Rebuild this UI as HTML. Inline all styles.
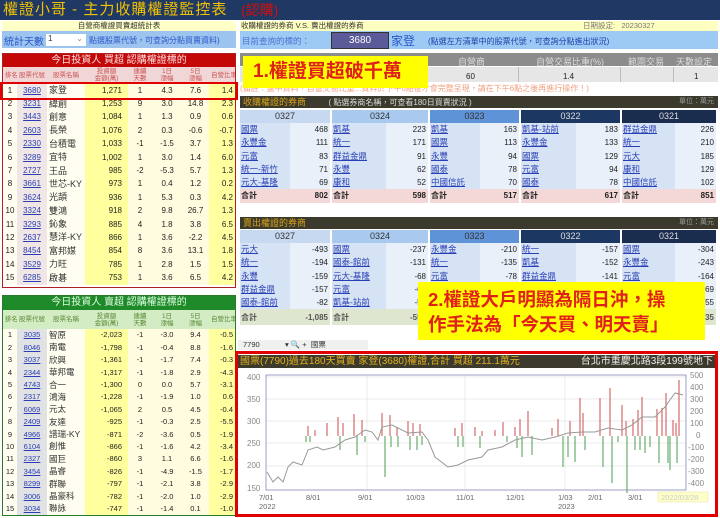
<!DOCTYPE html>
<html><head><meta charset="utf-8">
<style>
*{margin:0;padding:0;box-sizing:border-box}
body{width:720px;height:518px;overflow:hidden;background:#fff;position:relative;font-family:"Liberation Sans","Noto Sans CJK TC",sans-serif;font-size:8px;color:#222}
.a{position:absolute}
table{border-collapse:collapse;table-layout:fixed}
td{padding:0 2px;white-space:nowrap;overflow:hidden;line-height:1}
.lt td{height:13.4px;font-size:8px;text-align:right}
.lt td:nth-child(1){text-align:center;background:#fffef0}
.lt td:nth-child(2){text-align:center;background:#f0e6e6;color:#2a3fb5;text-decoration:underline}
.lt td:nth-child(3){text-align:left;background:#fffef0;font-size:9px;color:#333}
.lt td:nth-child(4){background:#ffff9e;padding-right:6px}
.lt td:nth-child(5),.lt td:nth-child(6),.lt td:nth-child(7){background:#fffce0;text-align:center}
.lt td:nth-child(8){background:#ffffa0}
.gt td{height:12.4px;font-size:7.5px}
.gt td:nth-child(3){font-size:8.5px}
.gt td:nth-child(2){background:#e0e2e4}
.ch td{font-size:6.5px;color:#c55;text-align:center;line-height:7px}
.bk{position:absolute;width:96px}
.bk div{height:13.3px;line-height:13.3px;font-size:8px;position:relative}
.bk .h{height:13px;line-height:13px;text-align:center;font-size:9px;color:#333}
.bk .r span.n{position:absolute;left:0;top:0;width:56%;height:100%;background:#d6e3f5;color:#2a3fb5;text-decoration:underline;padding-left:1px;font-size:8.5px}
.bk .r{background:#e9f0fa}
.bk .r span.v{position:absolute;right:2px;top:0}
.bk .s{background:#f4d8d8;font-weight:bold}
.bk .s span{position:absolute}
.bk .g{background:#dfe6cf;color:#555}
.dark{background:#3b3a2c;color:#d8a21a;font-size:9px;height:12px;line-height:12px;padding-left:3px}
</style></head><body>

<div class="a" style="left:0;top:0;width:720px;height:20px;background:#1f3864"></div>
<div class="a" style="left:3px;top:1px;font-size:15px;color:#f2c200;letter-spacing:1px;line-height:18px">權證小哥 - 主力收購權證監控表</div>
<div class="a" style="left:241px;top:1px;font-size:14px;color:#d01010;line-height:18px">(認購)</div>

<div class="a" style="left:2px;top:21px;width:234px;height:10px;background:#ffffc8;font-size:7.5px;text-align:center;line-height:10px;color:#333">自營商權證買賣超統計表</div>
<div class="a" style="left:2px;top:31px;width:234px;height:17px;background:#9cc4ef"></div>
<div class="a" style="left:4px;top:33px;font-size:10px;color:#2b56c8">統計天數：</div>
<div class="a" style="left:46px;top:34px;width:40px;height:12px;background:#fff;font-size:8px;padding-left:2px;color:#333">1<span style="position:absolute;right:3px;color:#888">⌄</span></div>
<div class="a" style="left:89px;top:35px;font-size:8px;color:#2b56c8">點選股票代號，可查詢分點買賣資料)</div>

<div class="a" style="left:2px;top:53px;width:234px;height:235px;border:1px solid #b02020;background:#fff"></div>
<div class="a" style="left:3px;top:54px;width:232px;height:13px;background:#c40808;color:#ffe0e0;text-align:center;font-size:10px;line-height:13px">今日投資人 買超 認購權證標的</div>
<table class="a ch" style="left:3px;top:67px;width:232px;background:#f0d6d6">
<colgroup><col style="width:14px"><col style="width:30px"><col style="width:38px"><col style="width:43px"><col style="width:24px"><col style="width:30px"><col style="width:27px"><col style="width:26px"></colgroup>
<tr style="height:16px"><td>排名</td><td>股票代號</td><td>股票名稱</td><td>投資額<br>金額(萬)</td><td>連續<br>天數</td><td>1日<br>漲幅</td><td>5日<br>漲幅</td><td>自營比率</td></tr></table>
<table class="a lt" style="left:3px;top:84px;width:232px">
<colgroup><col style="width:14px"><col style="width:30px"><col style="width:38px"><col style="width:43px"><col style="width:24px"><col style="width:30px"><col style="width:27px"><col style="width:26px"></colgroup>
<tr><td>1</td><td>3680</td><td>家登</td><td>1,271</td><td>1</td><td>4.3</td><td>7.6</td><td>1.4</td></tr>
<tr><td>2</td><td>3231</td><td>緯創</td><td>1,253</td><td>9</td><td>3.0</td><td>14.8</td><td>2.3</td></tr>
<tr><td>3</td><td>3443</td><td>創意</td><td>1,084</td><td>1</td><td>1.3</td><td>0.9</td><td>0.6</td></tr>
<tr><td>4</td><td>2603</td><td>長榮</td><td>1,076</td><td>2</td><td>0.3</td><td>-0.6</td><td>-0.7</td></tr>
<tr><td>5</td><td>2330</td><td>台積電</td><td>1,033</td><td>-1</td><td>-1.5</td><td>3.7</td><td>1.3</td></tr>
<tr><td>6</td><td>3289</td><td>宜特</td><td>1,002</td><td>1</td><td>3.0</td><td>1.4</td><td>6.0</td></tr>
<tr><td>7</td><td>2727</td><td>王品</td><td>985</td><td>-2</td><td>-5.3</td><td>5.7</td><td>1.3</td></tr>
<tr><td>8</td><td>3661</td><td>世芯-KY</td><td>973</td><td>1</td><td>0.4</td><td>1.2</td><td>0.2</td></tr>
<tr><td>9</td><td>3624</td><td>光頡</td><td>936</td><td>1</td><td>5.3</td><td>0.3</td><td>4.2</td></tr>
<tr><td>10</td><td>3324</td><td>雙鴻</td><td>918</td><td>2</td><td>9.8</td><td>26.7</td><td>1.3</td></tr>
<tr><td>11</td><td>3293</td><td>鈊象</td><td>885</td><td>4</td><td>1.8</td><td>3.8</td><td>6.5</td></tr>
<tr><td>12</td><td>2637</td><td>慧洋-KY</td><td>866</td><td>1</td><td>3.6</td><td>-2.2</td><td>4.5</td></tr>
<tr><td>13</td><td>8454</td><td>富邦媒</td><td>854</td><td>8</td><td>3.6</td><td>13.1</td><td>1.8</td></tr>
<tr><td>14</td><td>3529</td><td>力旺</td><td>785</td><td>1</td><td>2.8</td><td>1.5</td><td>1.5</td></tr>
<tr><td>15</td><td>6285</td><td>啟碁</td><td>753</td><td>1</td><td>3.6</td><td>6.5</td><td>4.2</td></tr>
</table>
<div class="a" style="left:0;top:82px;width:238px;height:18px;border:2px solid #e00000"></div>

<div class="a" style="left:2px;top:295px;width:234px;height:221px;border:1px solid #2a7a2a;background:#fff"></div>
<div class="a" style="left:3px;top:296px;width:232px;height:14px;background:#1f8a2a;color:#e0ffe0;text-align:center;font-size:10px;line-height:14px">今日投資人 賣超 認購權證標的</div>
<table class="a ch" style="left:3px;top:310px;width:232px;background:#d4ecc4">
<colgroup><col style="width:14px"><col style="width:30px"><col style="width:38px"><col style="width:43px"><col style="width:24px"><col style="width:30px"><col style="width:27px"><col style="width:26px"></colgroup>
<tr style="height:19px"><td style="color:#5a8a3a">排名</td><td style="color:#5a8a3a">股票代號</td><td style="color:#5a8a3a">股票名稱</td><td style="color:#5a8a3a">投資額<br>金額(萬)</td><td style="color:#5a8a3a">連續<br>天數</td><td style="color:#5a8a3a">1日<br>漲幅</td><td style="color:#5a8a3a">5日<br>漲幅</td><td style="color:#5a8a3a">自營比率</td></tr></table>
<table class="a lt gt" style="left:3px;top:329px;width:232px">
<colgroup><col style="width:14px"><col style="width:30px"><col style="width:38px"><col style="width:43px"><col style="width:24px"><col style="width:30px"><col style="width:27px"><col style="width:26px"></colgroup>
<tr><td>1</td><td>3035</td><td>智原</td><td>-2,023</td><td>-1</td><td>-3.0</td><td>9.4</td><td>-0.5</td></tr>
<tr><td>2</td><td>8046</td><td>南電</td><td>-1,798</td><td>-1</td><td>-0.4</td><td>8.8</td><td>-1.6</td></tr>
<tr><td>3</td><td>3037</td><td>欣興</td><td>-1,361</td><td>-1</td><td>-1.7</td><td>7.4</td><td>-0.3</td></tr>
<tr><td>4</td><td>2344</td><td>華邦電</td><td>-1,317</td><td>-1</td><td>-1.8</td><td>2.9</td><td>-4.3</td></tr>
<tr><td>5</td><td>4743</td><td>合一</td><td>-1,300</td><td>0</td><td>0.0</td><td>5.7</td><td>-3.1</td></tr>
<tr><td>6</td><td>2317</td><td>鴻海</td><td>-1,228</td><td>-1</td><td>-1.9</td><td>1.0</td><td>0.6</td></tr>
<tr><td>7</td><td>6069</td><td>元太</td><td>-1,065</td><td>2</td><td>0.5</td><td>4.5</td><td>-0.4</td></tr>
<tr><td>8</td><td>2409</td><td>友達</td><td>-925</td><td>-1</td><td>-0.3</td><td>2.5</td><td>-5.5</td></tr>
<tr><td>9</td><td>4966</td><td>譜瑞-KY</td><td>-871</td><td>-2</td><td>-3.6</td><td>0.5</td><td>-1.9</td></tr>
<tr><td>10</td><td>6104</td><td>創惟</td><td>-866</td><td>-1</td><td>-1.6</td><td>4.2</td><td>-3.4</td></tr>
<tr><td>11</td><td>2327</td><td>國巨</td><td>-860</td><td>3</td><td>1.1</td><td>6.6</td><td>-1.6</td></tr>
<tr><td>12</td><td>3454</td><td>晶睿</td><td>-826</td><td>-1</td><td>-4.9</td><td>-1.5</td><td>-1.7</td></tr>
<tr><td>13</td><td>8299</td><td>群聯</td><td>-797</td><td>-1</td><td>-2.1</td><td>3.8</td><td>-2.9</td></tr>
<tr><td>14</td><td>3006</td><td>晶豪科</td><td>-782</td><td>-1</td><td>-2.0</td><td>1.0</td><td>-2.9</td></tr>
<tr><td>15</td><td>3034</td><td>聯詠</td><td>-747</td><td>-1</td><td>-1.4</td><td>0.1</td><td>-1.0</td></tr>
</table>

<div class="a" style="left:240px;top:21px;width:478px;height:10px;background:#ffffc0;font-size:7.5px;line-height:10px;padding-left:1px;color:#333">收購權證的券商 V.S. 賣出權證的券商<span style="position:absolute;left:343px;color:#777">日期設定:&nbsp;&nbsp;&nbsp;20230327</span></div>
<div class="a" style="left:240px;top:31px;width:478px;height:18px;background:#9ccaf5"></div>
<div class="a" style="left:242px;top:35px;font-size:8.5px;color:#4a73d0">目前查詢的標的：</div>
<div class="a" style="left:331px;top:32px;width:58px;height:17px;background:#5b5b9a;border:1px solid #333;color:#fff;font-size:10px;text-align:center;line-height:15px">3680</div>
<div class="a" style="left:391px;top:32px;font-size:12px;color:#2b56c8">家登</div>
<div class="a" style="left:428px;top:36px;font-size:8px;color:#1d3fa8">(點選左方清單中的股票代號，可查詢分點進出狀況)</div>
<div class="a" style="left:240px;top:53px;width:478px;height:13px;background:#8c8c8c"></div>
<div class="a" style="left:240px;top:67px;width:478px;height:15px;background:#e6e6e6"></div>
<div class="a" style="left:518px;top:67px;width:1px;height:15px;background:#bbb"></div>
<div class="a" style="left:620px;top:67px;width:1px;height:15px;background:#bbb"></div>
<div class="a" style="left:673px;top:67px;width:1px;height:15px;background:#bbb"></div>
<div class="a" style="left:458px;top:55px;font-size:9px;color:#ddd">自營商</div>
<div class="a" style="left:536px;top:55px;font-size:9px;color:#ddd">自營交易比重(%)</div>
<div class="a" style="left:628px;top:55px;font-size:9px;color:#ddd">範圍交易</div>
<div class="a" style="left:676px;top:55px;font-size:9px;color:#ddd">天數設定</div>
<div class="a" style="left:466px;top:72px;font-size:8px">60</div>
<div class="a" style="left:563px;top:72px;font-size:8px">1.4</div>
<div class="a" style="left:694px;top:72px;font-size:8px">1</div>
<div class="a" style="left:240px;top:83px;font-size:8px;color:#f0a080">(備註：盤中資料，自營交易比重...資料於下午6點後才會完整呈現，請在下午6點之後再進行操作！)</div>
<div class="a" style="left:243px;top:56px;width:185px;height:32px;background:#ffff00"></div>
<div class="a" style="left:253px;top:58px;font-size:19px;color:#e0201a;line-height:28px;font-weight:bold">1.權證買超破千萬</div>

<div class="a dark" style="left:240px;top:96px;width:478px">收購權證的券商 <span style="color:#ddd;font-size:8px;margin-left:20px">( 點選券商名稱，可查看180日買賣狀況 )</span><span style="position:absolute;right:4px;color:#999;font-size:7px">單位：萬元</span></div>

<div class="bk" style="left:240px;top:110px;width:90px"><div class="h" style="background:#c6d9f1">0327</div>
<div class="r"><span class="n">國票</span><span class="v">468</span></div><div class="r"><span class="n">永豐金</span><span class="v">111</span></div><div class="r"><span class="n">元富</span><span class="v">83</span></div><div class="r"><span class="n">統一-新竹</span><span class="v">71</span></div><div class="r"><span class="n">元大-基隆</span><span class="v">69</span></div><div class="s"><span style="left:1px">合計</span><span style="right:2px">802</span></div></div>
<div class="bk" style="left:332px;top:110px"><div class="h" style="background:#a9c9ee">0324</div>
<div class="r"><span class="n">凱基</span><span class="v">223</span></div><div class="r"><span class="n">統一</span><span class="v">171</span></div><div class="r"><span class="n">群益金鼎</span><span class="v">91</span></div><div class="r"><span class="n">永豐</span><span class="v">62</span></div><div class="r"><span class="n">康和</span><span class="v">52</span></div><div class="s"><span style="left:1px">合計</span><span style="right:2px">598</span></div></div>
<div class="bk" style="left:430px;top:110px;width:89px"><div class="h" style="background:#5f93d8">0323</div>
<div class="r"><span class="n">凱基</span><span class="v">163</span></div><div class="r"><span class="n">國票</span><span class="v">113</span></div><div class="r"><span class="n">永豐</span><span class="v">94</span></div><div class="r"><span class="n">國泰</span><span class="v">78</span></div><div class="r"><span class="n">中國信託</span><span class="v">70</span></div><div class="s"><span style="left:1px">合計</span><span style="right:2px">517</span></div></div>
<div class="bk" style="left:521px;top:110px;width:99px"><div class="h" style="background:#1c3862;color:#ddd">0322</div>
<div class="r"><span class="n">凱基-站前</span><span class="v">183</span></div><div class="r"><span class="n">永豐金</span><span class="v">133</span></div><div class="r"><span class="n">國票</span><span class="v">129</span></div><div class="r"><span class="n">元富</span><span class="v">94</span></div><div class="r"><span class="n">國泰</span><span class="v">78</span></div><div class="s"><span style="left:1px">合計</span><span style="right:2px">617</span></div></div>
<div class="bk" style="left:622px;top:110px;width:94px"><div class="h" style="background:#1b2d4f;color:#ddd">0321</div>
<div class="r"><span class="n">群益金鼎</span><span class="v">226</span></div><div class="r"><span class="n">統一</span><span class="v">210</span></div><div class="r"><span class="n">元大</span><span class="v">185</span></div><div class="r"><span class="n">康和</span><span class="v">129</span></div><div class="r"><span class="n">中國信託</span><span class="v">102</span></div><div class="s"><span style="left:1px">合計</span><span style="right:2px">851</span></div></div>

<div class="a dark" style="left:240px;top:217px;width:478px">賣出權證的券商<span style="position:absolute;right:4px;color:#999;font-size:7px">單位：萬元</span></div>

<div class="bk" style="left:240px;top:230px;width:90px"><div class="h" style="background:#c6d9f1">0327</div>
<div class="r"><span class="n">元大</span><span class="v">-493</span></div><div class="r"><span class="n">統一</span><span class="v">-194</span></div><div class="r"><span class="n">永豐</span><span class="v">-159</span></div><div class="r"><span class="n">群益金鼎</span><span class="v">-157</span></div><div class="r"><span class="n">國泰-館前</span><span class="v">-82</span></div><div class="s g" style="height:16px"><span style="left:1px;top:2px">合計</span><span style="right:2px;top:2px">-1,085</span></div></div>
<div class="bk" style="left:332px;top:230px"><div class="h" style="background:#a9c9ee">0324</div>
<div class="r"><span class="n">國票</span><span class="v">-237</span></div><div class="r"><span class="n">國泰-館前</span><span class="v">-131</span></div><div class="r"><span class="n">元大-基隆</span><span class="v">-68</span></div><div class="r"><span class="n">元富</span><span class="v">-66</span></div><div class="r"><span class="n">凱基-站前</span><span class="v">-55</span></div><div class="s g" style="height:16px"><span style="left:1px;top:2px">合計</span><span style="right:2px;top:2px">-557</span></div></div>
<div class="bk" style="left:430px;top:230px;width:89px"><div class="h" style="background:#5f93d8">0323</div>
<div class="r"><span class="n">永豐金</span><span class="v">-210</span></div><div class="r"><span class="n">統一</span><span class="v">-135</span></div><div class="r"><span class="n">元富</span><span class="v">-78</span></div><div class="r"></div><div class="r"></div><div class="s g" style="height:16px"></div></div>
<div class="bk" style="left:521px;top:230px;width:99px"><div class="h" style="background:#1c3862;color:#ddd">0322</div>
<div class="r"><span class="n">統一</span><span class="v">-157</span></div><div class="r"><span class="n">凱基</span><span class="v">-152</span></div><div class="r"><span class="n">群益金鼎</span><span class="v">-141</span></div><div class="r"></div><div class="r"></div><div class="s g" style="height:16px"></div></div>
<div class="bk" style="left:622px;top:230px;width:94px"><div class="h" style="background:#1b2d4f;color:#ddd">0321</div>
<div class="r"><span class="n">國票</span><span class="v">-304</span></div><div class="r"><span class="n">永豐金</span><span class="v">-243</span></div><div class="r"><span class="n">元富</span><span class="v">-164</span></div><div class="r"><span class="n"></span><span class="v">-69</span></div><div class="r"><span class="n"></span><span class="v">-55</span></div><div class="s g" style="height:16px"><span style="right:2px;top:2px">-835</span></div></div>

<div class="a" style="left:418px;top:282px;width:287px;height:58px;background:#ffff00"></div>
<div class="a" style="left:428px;top:287px;font-size:18.5px;color:#e0201a;line-height:25px;font-weight:bold;white-space:nowrap">2.權證大戶明顯為隔日沖，操<br>作手法為「今天買、明天賣」</div>

<div class="a" style="left:238px;top:340px;width:130px;height:10px;background:#f0f0f0"></div>
<div class="a" style="left:243px;top:340px;font-size:7.5px;color:#333">7790</div>
<div class="a" style="left:285px;top:339px;font-size:7.5px;color:#333">▾ 🔍 + &nbsp;國票</div>

<div class="a" style="left:235px;top:351px;width:483px;height:166px;border:3px solid #e00000;background:#fff"></div>
<div class="a" style="left:238px;top:355px;width:477px;height:13px;background:#3b3a2c;font-size:10px;line-height:13px;color:#e3b020;padding-left:2px;white-space:nowrap;overflow:hidden">國票(7790)過去180天買賣 家登(3680)權證,合計 買超 211.1萬元<span style="position:absolute;right:2px;color:#eee">台北市重慶北路3段199號地下</span></div>
<svg class="a" style="left:238px;top:368px" width="477" height="146" viewBox="238 368 477 146">
<g stroke="#e4e4e4" stroke-width="0.7">
<line x1="266" y1="377" x2="686" y2="377"/><line x1="266" y1="399" x2="686" y2="399"/><line x1="266" y1="421" x2="686" y2="421"/><line x1="266" y1="443" x2="686" y2="443"/><line x1="266" y1="466" x2="686" y2="466"/>
<line x1="367" y1="375" x2="367" y2="490"/><line x1="465" y1="375" x2="465" y2="490"/><line x1="565" y1="375" x2="565" y2="490"/>
</g>
<rect x="266" y="375" width="420" height="115" fill="none" stroke="#8888bb" stroke-width="0.8"/>
<g font-size="8" fill="#888" font-family="Liberation Sans">
<text x="247" y="380">400</text><text x="247" y="402">350</text><text x="247" y="424">300</text><text x="247" y="446">250</text><text x="247" y="468">200</text><text x="247" y="491">150</text>
<text x="690" y="378">500</text><text x="690" y="390">400</text><text x="690" y="402">300</text><text x="690" y="414">200</text><text x="690" y="426">100</text><text x="696" y="438">0</text><text x="688" y="450">-100</text><text x="688" y="462">-200</text><text x="688" y="474">-300</text><text x="688" y="486">-400</text>
</g>
<g font-size="7.5" fill="#666" font-family="Liberation Sans">
<text x="259" y="500">7/01</text><text x="259" y="509">2022</text><text x="306" y="500">8/01</text><text x="358" y="500">9/01</text><text x="406" y="500">10/03</text><text x="456" y="500">11/01</text><text x="506" y="500">12/01</text><text x="558" y="500">1/03</text><text x="558" y="509">2023</text><text x="588" y="500">2/01</text><text x="628" y="500">3/01</text>
</g>
<rect x="658" y="492" width="50" height="10" fill="#ffffc8" stroke="#e8e0a0" stroke-width="0.5"/>
<text x="661" y="500" font-size="7.5" fill="#ccc">2022/03/28</text>
<g stroke="#d46a6a" stroke-width="1.2">
<line x1="308" y1="436" x2="308" y2="426"/><line x1="315" y1="436" x2="315" y2="430"/><line x1="327" y1="436" x2="327" y2="423"/><line x1="338" y1="436" x2="338" y2="417"/><line x1="343" y1="436" x2="343" y2="423"/><line x1="354" y1="436" x2="354" y2="414"/><line x1="362" y1="436" x2="362" y2="420"/><line x1="382" y1="436" x2="382" y2="413"/><line x1="390" y1="436" x2="390" y2="415"/><line x1="397" y1="436" x2="397" y2="427"/><line x1="408" y1="436" x2="408" y2="421"/><line x1="413" y1="436" x2="413" y2="423"/><line x1="420" y1="436" x2="420" y2="424"/><line x1="455" y1="436" x2="455" y2="428"/><line x1="462" y1="436" x2="462" y2="423"/><line x1="475" y1="436" x2="475" y2="427"/><line x1="482" y1="436" x2="482" y2="431"/><line x1="495" y1="436" x2="495" y2="430"/><line x1="503" y1="436" x2="503" y2="422"/><line x1="515" y1="436" x2="515" y2="427"/><line x1="520" y1="436" x2="520" y2="419"/><line x1="528" y1="436" x2="528" y2="411"/><line x1="552" y1="436" x2="552" y2="428"/><line x1="558" y1="436" x2="558" y2="419"/><line x1="570" y1="436" x2="570" y2="421"/><line x1="580" y1="436" x2="580" y2="398"/><line x1="583" y1="436" x2="583" y2="413"/><line x1="600" y1="436" x2="600" y2="398"/><line x1="610" y1="436" x2="610" y2="388"/><line x1="622" y1="436" x2="622" y2="405"/><line x1="626" y1="436" x2="626" y2="421"/><line x1="633" y1="436" x2="633" y2="419"/><line x1="638" y1="436" x2="638" y2="410"/><line x1="642" y1="436" x2="642" y2="397"/><line x1="657" y1="436" x2="657" y2="409"/><line x1="662" y1="436" x2="662" y2="408"/><line x1="666" y1="436" x2="666" y2="393"/><line x1="673" y1="436" x2="673" y2="420"/><line x1="676" y1="436" x2="676" y2="423"/><line x1="679" y1="436" x2="679" y2="380"/>
</g>
<g stroke="#6aae6a" stroke-width="1.2">
<line x1="306" y1="436" x2="306" y2="442"/><line x1="310" y1="436" x2="310" y2="442"/><line x1="340" y1="436" x2="340" y2="450"/><line x1="357" y1="436" x2="357" y2="455"/><line x1="365" y1="436" x2="365" y2="442"/><line x1="385" y1="436" x2="385" y2="477"/><line x1="391" y1="436" x2="391" y2="447"/><line x1="398" y1="436" x2="398" y2="447"/><line x1="410" y1="436" x2="410" y2="450"/><line x1="417" y1="436" x2="417" y2="450"/><line x1="422" y1="436" x2="422" y2="445"/><line x1="458" y1="436" x2="458" y2="447"/><line x1="463" y1="436" x2="463" y2="447"/><line x1="480" y1="436" x2="480" y2="448"/><line x1="507" y1="436" x2="507" y2="442"/><line x1="517" y1="436" x2="517" y2="448"/><line x1="522" y1="436" x2="522" y2="457"/><line x1="532" y1="436" x2="532" y2="455"/><line x1="563" y1="436" x2="563" y2="467"/><line x1="568" y1="436" x2="568" y2="457"/><line x1="575" y1="436" x2="575" y2="462"/><line x1="585" y1="436" x2="585" y2="450"/><line x1="603" y1="436" x2="603" y2="467"/><line x1="612" y1="436" x2="612" y2="483"/><line x1="618" y1="436" x2="618" y2="442"/><line x1="627" y1="436" x2="627" y2="493"/><line x1="635" y1="436" x2="635" y2="450"/><line x1="640" y1="436" x2="640" y2="450"/><line x1="645" y1="436" x2="645" y2="453"/><line x1="650" y1="436" x2="650" y2="447"/><line x1="659" y1="436" x2="659" y2="463"/><line x1="668" y1="436" x2="668" y2="463"/><line x1="670" y1="436" x2="670" y2="470"/><line x1="677" y1="436" x2="677" y2="463"/>
</g>
<polyline fill="none" stroke="#999" stroke-width="1" points="267,472 273,482 278,477 283,482 288,467 293,462 302,465 308,450 317,447 323,450 335,447 345,440 355,437 365,430 372,432 378,440 382,427 392,425 408,433 422,432 428,440 435,457 448,467 458,465 468,460 482,457 488,450 502,447 515,440 528,437 542,440 555,437 568,433 582,432 595,432 608,428 622,430 632,425 642,417 655,417 665,407 675,393 683,395"/>
</svg>
</body></html>
